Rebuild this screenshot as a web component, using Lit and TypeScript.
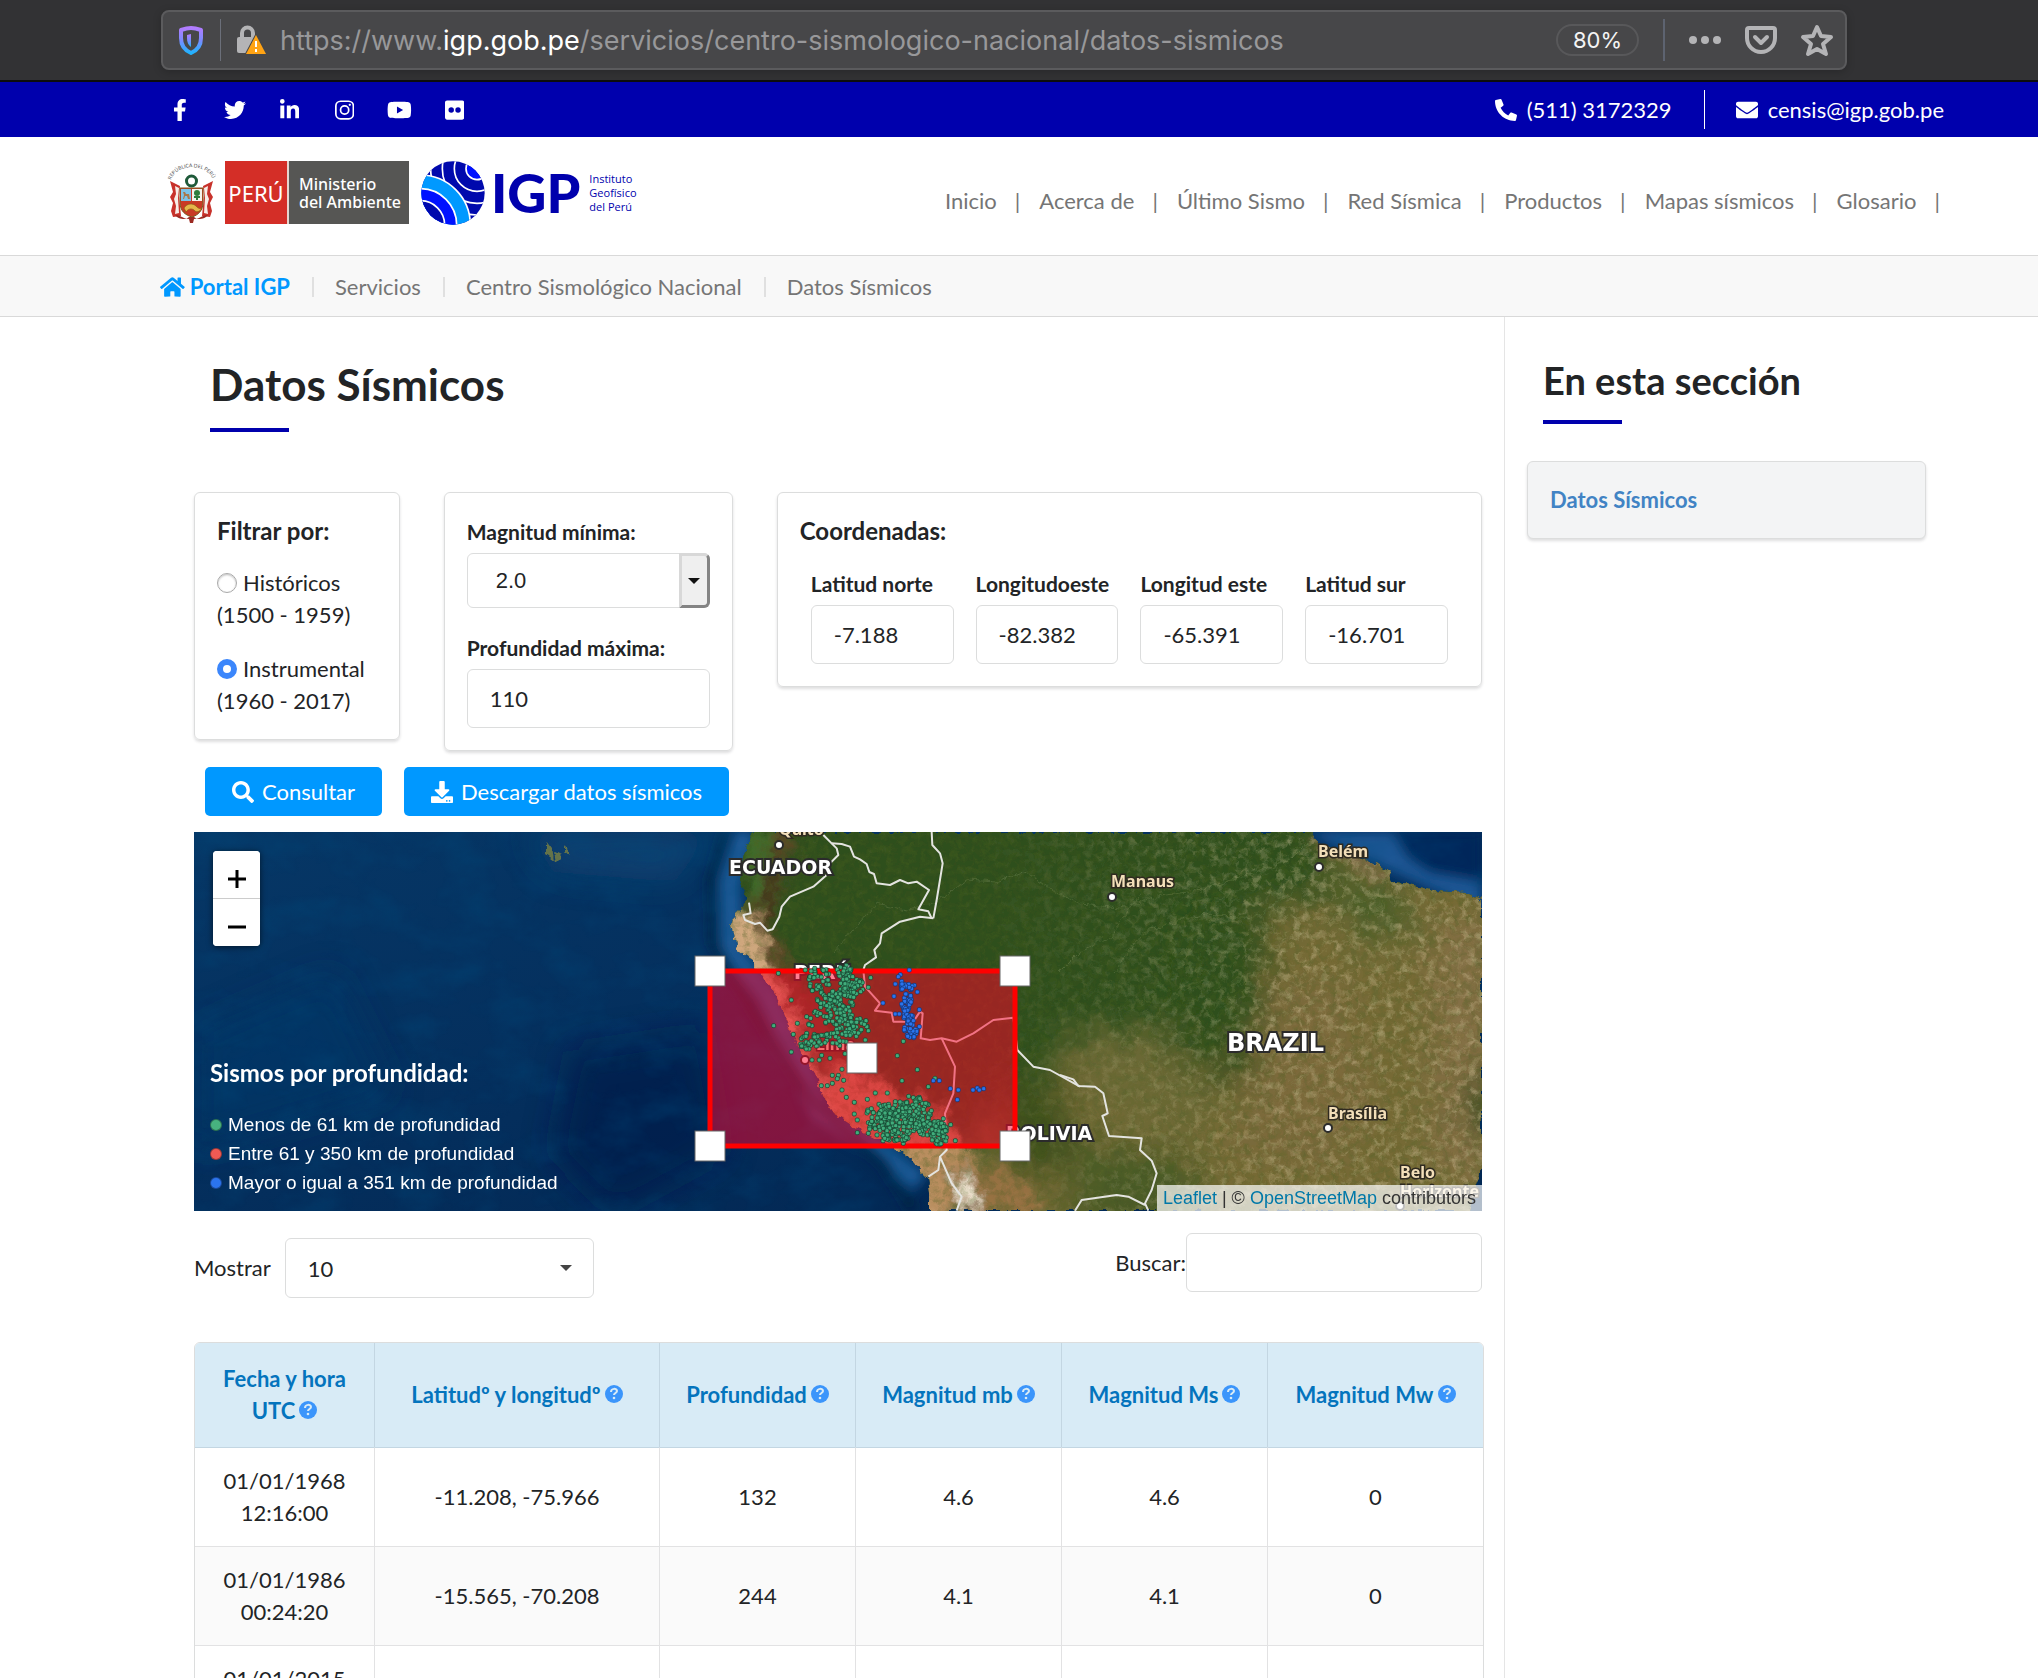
import { LitElement, html, css, svg } from "lit";
import { customElement, property } from "lit/decorators.js";

type Glyph = { box: string; d: string; flip?: boolean };

const GLYPHS: Record<string, Glyph> = {
  facebook: {
    box: "0 0 320 512",
    d: "M279.14 288l14.22-92.66h-88.91v-60.13c0-25.35 12.42-50.06 52.24-50.06h40.42V6.26S260.43 0 225.36 0c-73.22 0-121.08 44.38-121.08 124.72v70.62H22.89V288h81.39v224h100.17V288z",
  },
  twitter: {
    box: "0 0 512 512",
    d: "M459.37 151.716c.325 4.548.325 9.097.325 13.645 0 138.72-105.583 298.558-298.558 298.558-59.452 0-114.68-17.219-161.137-47.106 8.447.974 16.568 1.299 25.34 1.299 49.055 0 94.213-16.568 130.274-44.832-46.132-.975-84.792-31.188-98.112-72.772 6.498.974 12.995 1.624 19.818 1.624 9.421 0 18.843-1.3 27.614-3.573-48.081-9.747-84.143-51.98-84.143-102.985v-1.299c13.969 7.797 30.214 12.67 47.431 13.319-28.264-18.843-46.781-51.005-46.781-87.391 0-19.492 5.197-37.36 14.294-52.954 51.655 63.675 129.3 105.258 216.365 109.807-1.624-7.797-2.599-15.918-2.599-24.04 0-57.828 46.782-104.934 104.934-104.934 30.213 0 57.502 12.67 76.67 33.137 23.715-4.548 46.456-13.32 66.599-25.34-7.798 24.366-24.366 44.833-46.132 57.827 21.117-2.273 41.584-8.122 60.426-16.243-14.292 20.791-32.161 39.308-52.628 54.253z",
  },
  linkedin: {
    box: "0 0 448 512",
    d: "M100.28 448H7.4V148.9h92.88zM53.79 108.1C24.09 108.1 0 83.5 0 53.8a53.79 53.79 0 0 1 107.58 0c0 29.7-24.1 54.3-53.79 54.3zM447.9 448h-92.68V302.4c0-34.7-.7-79.2-48.29-79.2-48.29 0-55.69 37.7-55.69 76.7V448h-92.78V148.9h89.08v40.8h1.3c12.4-23.5 42.69-48.3 87.88-48.3 94 0 111.28 61.9 111.28 142.3V448z",
  },
  instagram: {
    box: "0 0 448 512",
    d: "M132 32h184a132 132 0 0 1 132 132v184a132 132 0 0 1-132 132H132A132 132 0 0 1 0 348V164A132 132 0 0 1 132 32zm0 40a92 92 0 0 0-92 92v184a92 92 0 0 0 92 92h184a92 92 0 0 0 92-92V164a92 92 0 0 0-92-92zM224 141a115 115 0 1 1 0 230 115 115 0 0 1 0-230zm0 40a75 75 0 1 0 0 150 75 75 0 0 0 0-150zM344 109a27 27 0 1 1 0 54 27 27 0 0 1 0-54z",
  },
  youtube: {
    box: "0 0 576 512",
    d: "M549.655 124.083c-6.281-23.65-24.787-42.276-48.284-48.597C458.781 64 288 64 288 64S117.22 64 74.629 75.486c-23.497 6.322-42.003 24.947-48.284 48.597-11.412 42.867-11.412 132.305-11.412 132.305s0 89.438 11.412 132.305c6.281 23.65 24.787 41.5 48.284 47.821C117.22 448 288 448 288 448s170.78 0 213.371-11.486c23.497-6.321 42.003-24.171 48.284-47.821 11.412-42.867 11.412-132.305 11.412-132.305s0-89.438-11.412-132.305zm-317.51 213.508V175.185l142.739 81.205-142.739 81.201z",
  },
  flickr: {
    box: "0 0 448 512",
    d: "M400 32H48C21.5 32 0 53.5 0 80v352c0 26.5 21.5 48 48 48h352c26.5 0 48-21.5 48-48V80c0-26.5-21.5-48-48-48zM144.5 319a63.5 63.5 0 1 1 0-127 63.5 63.5 0 0 1 0 127zm159 0a63.5 63.5 0 1 1 0-127 63.5 63.5 0 0 1 0 127z",
  },
  phone: {
    box: "0 0 512 512",
    flip: true,
    d: "M493.4 24.6l-104-24c-11.3-2.6-22.9 3.3-27.5 13.9l-48 112c-4.2 9.8-1.4 21.3 6.9 28l60.6 49.6c-36 76.7-98.9 140.5-177.2 177.2l-49.6-60.6c-6.8-8.3-18.2-11.1-28-6.9l-112 48C3.9 366.5-2 378.1.6 389.4l24 104C27.1 504.2 36.7 512 48 512c256.1 0 464-207.5 464-464 0-11.2-7.7-20.9-18.6-23.4z",
  },
  envelope: {
    box: "0 0 512 512",
    d: "M502.3 190.8c3.9-3.1 9.7-.2 9.7 4.7V400c0 26.5-21.5 48-48 48H48c-26.5 0-48-21.5-48-48V195.6c0-5 5.7-7.8 9.7-4.7 22.4 17.4 52.1 39.5 154.1 113.6 21.1 15.4 56.7 47.8 92.2 47.6 35.7.3 72-32.8 92.3-47.6 102-74.1 131.6-96.3 154-113.7zM256 320c23.2.4 56.6-29.2 73.4-41.4 132.7-96.3 142.8-104.7 173.4-128.7 5.8-4.5 9.2-11.5 9.2-18.9v-19c0-26.5-21.5-48-48-48H48c-26.5 0-48 21.5-48 48v19c0 7.4 3.4 14.3 9.2 18.9 30.6 23.9 40.7 32.4 173.4 128.7 16.8 12.2 50.2 41.8 73.4 41.4z",
  },
  home: {
    box: "0 0 576 512",
    d: "M280.37 148.26L96 300.11V464a16 16 0 0 0 16 16l112.06-.29a16 16 0 0 0 15.92-16V368a16 16 0 0 1 16-16h64a16 16 0 0 1 16 16v95.64a16 16 0 0 0 16 16.05L464 480a16 16 0 0 0 16-16V300L295.67 148.26a12.19 12.19 0 0 0-15.3 0zM571.6 251.47L488 182.56V44.05a12 12 0 0 0-12-12h-56a12 12 0 0 0-12 12v72.61L318.47 43a48 48 0 0 0-61 0L4.34 251.47a12 12 0 0 0-1.6 16.9l25.5 31A12 12 0 0 0 45.15 301l235.22-193.74a12.19 12.19 0 0 1 15.3 0L530.9 301a12 12 0 0 0 16.9-1.6l25.5-31a12 12 0 0 0-1.7-16.93z",
  },
  search: {
    box: "0 0 512 512",
    d: "M505 442.7L405.3 343c-4.5-4.5-10.6-7-17-7H372c27.6-35.3 44-79.7 44-128C416 93.1 322.9 0 208 0S0 93.1 0 208s93.1 208 208 208c48.3 0 92.7-16.4 128-44v16.3c0 6.4 2.5 12.5 7 17l99.7 99.7c9.4 9.4 24.6 9.4 33.9 0l28.3-28.3c9.4-9.4 9.4-24.6.1-34zM208 336c-70.7 0-128-57.2-128-128 0-70.7 57.2-128 128-128 70.7 0 128 57.2 128 128 0 70.7-57.2 128-128 128z",
  },
  download: {
    box: "0 0 512 512",
    d: "M216 0h80c13.3 0 24 10.7 24 24v168h87.7c17.8 0 26.7 21.5 14.1 34.1L269.7 378.3c-7.5 7.5-19.8 7.5-27.3 0L90.1 226.1c-12.6-12.6-3.7-34.1 14.1-34.1H192V24c0-13.3 10.7-24 24-24zm296 376v112c0 13.3-10.7 24-24 24H24c-13.3 0-24-10.7-24-24V376c0-13.3 10.7-24 24-24h146.7l49 49c20.1 20.1 52.5 20.1 72.6 0l49-49H488c13.3 0 24 10.7 24 24zm-124 88c0-11-9-20-20-20s-20 9-20 20 9 20 20 20 20-9 20-20zm64 0c0-11-9-20-20-20s-20 9-20 20 9 20 20 20 20-9 20-20z",
  },
};

@customElement("glyph-icon")
class GlyphIcon extends LitElement {
  @property() name = "home";
  static styles = css`
    :host {
      display: inline-flex;
      height: 22px;
    }
    .art {
      height: 100%;
      width: auto;
      fill: currentColor;
      fill-rule: evenodd;
    }
    .flip {
      transform: scaleX(-1);
    }
  `;
  render() {
    const g = GLYPHS[this.name];
    return html`<svg class="art ${g.flip ? "flip" : ""}" viewBox=${g.box} aria-hidden="true"><path d=${g.d} /></svg>`;
  }
}

@customElement("browser-bar")
class BrowserBar extends LitElement {
  static styles = css`
    :host {
      display: block;
      background: #323234;
      border-bottom: 2px solid #0c0c0d;
      padding: 10px 191px 10px 161px;
    }
    .field {
      display: flex;
      align-items: center;
      box-sizing: border-box;
      height: 60px;
      border: 2px solid #5b5b5d;
      border-radius: 8px;
      background: #474749;
      padding: 0 11px 0 14px;
      font-family: Inter, Roboto, sans-serif;
      box-shadow: 0 2px 8px rgba(0, 0, 0, 0.2);
    }
    .icon {
      display: flex;
      border: 0;
      padding: 0;
      background: none;
    }
    .rule {
      width: 1px;
      height: 42px;
      background: #6b6f7a;
      margin: 0 15px;
    }
    .url {
      flex: 1;
      margin-left: 14px;
      padding-top: 2px;
      font-size: 27px;
      line-height: 36px;
      color: #98989a;
      white-space: nowrap;
      overflow: hidden;
    }
    .domain {
      color: #fff;
    }
    .zoom {
      box-sizing: border-box;
      width: 83px;
      height: 32px;
      border: 2px solid #58585a;
      border-radius: 16px;
      background: none;
      color: #f4f4f4;
      font: 22px/28px Inter, Roboto, sans-serif;
      padding: 0;
    }
    .tools {
      display: flex;
      align-items: center;
      gap: 22px;
      margin-left: 6px;
    }
    .split {
      width: 2px;
      height: 42px;
      background: #5d6370;
      margin-left: 24px;
      margin-right: 17px;
    }
  `;
  render() {
    return html`
      <div class="field">
        <button class="icon" aria-label="Protección">
          <svg width="28" height="32" viewBox="0 0 28 32">
            <defs>
              <linearGradient id="sh" x1="0" y1="0" x2="0" y2="1">
                <stop offset="0" stop-color="#b27cff" />
                <stop offset="0.5" stop-color="#7a8cff" />
                <stop offset="1" stop-color="#21b3ff" />
              </linearGradient>
            </defs>
            <path d="M14 4C10 4 7 5 4 6v8c0 6 3 12 10 15 7-3 10-9 10-15V6c-3-1-6-2-10-2z" fill="none" stroke="url(#sh)" stroke-width="4" stroke-linejoin="round" />
            <path d="M14 10v13c-3-2-4-5-4-9v-3z" fill="url(#sh)" />
          </svg>
        </button>
        <span class="rule"></span>
        <button class="icon" aria-label="Seguridad del sitio">
          <svg width="30" height="32" viewBox="0 0 30 32">
            <path d="M6 15V9a5 5 0 0 1 11 0v5" fill="none" stroke="#b4b4b6" stroke-width="4" />
            <rect x="1" y="13" width="20" height="16" rx="2" fill="#b4b4b6" />
            <path d="M20 11l10 19H10z" fill="#ffa314" stroke="#474749" stroke-width="2" paint-order="stroke" stroke-linejoin="round" />
            <path d="M20 17v6M20 25v3" stroke="#fff" stroke-width="2" />
          </svg>
        </button>
        <div class="url">https://www.<span class="domain">igp.gob.pe</span>/servicios/centro-sismologico-nacional/datos-sismicos</div>
        <button class="zoom">80%</button>
        <span class="split"></span>
        <div class="tools">
          <button class="icon" aria-label="Más acciones">
            <svg width="34" height="12" viewBox="0 0 34 12" fill="#b4b4b6">
              <circle cx="5" cy="6" r="4" /><circle cx="17" cy="6" r="4" /><circle cx="29" cy="6" r="4" />
            </svg>
          </button>
          <button class="icon" aria-label="Guardar en Pocket">
            <svg width="34" height="34" viewBox="0 0 34 34" fill="none" stroke="#b4b4b6" stroke-linecap="round" stroke-linejoin="round">
              <path d="M5 5h24a2 2 0 0 1 2 2v8a14 14 0 0 1-28 0V7a2 2 0 0 1 2-2z" stroke-width="4" />
              <path d="M11 14l6 6 6-6" stroke-width="4" />
            </svg>
          </button>
          <button class="icon" aria-label="Marcador">
            <svg width="34" height="34" viewBox="0 0 34 34" fill="none" stroke="#b4b4b6" stroke-width="4" stroke-linejoin="round">
              <path d="M17 4l4 9 10 1-8 7 3 10-9-5-9 5 3-10-8-7 10-1z" />
            </svg>
          </button>
        </div>
      </div>
    `;
  }
}

@customElement("site-header")
class SiteHeader extends LitElement {
  static styles = css`
    :host {
      display: block;
      color: #757575;
    }
    .top {
      display: flex;
      justify-content: space-between;
      align-items: center;
      height: 55px;
      background: #0000ad;
      padding: 0 94px 0 152px;
      color: #fff;
    }
    .social,
    .contact {
      display: flex;
      align-items: center;
    }
    .social a {
      display: flex;
      justify-content: center;
      width: 55px;
      color: #fff;
    }
    .contact a {
      display: flex;
      align-items: center;
      gap: 10px;
      color: #fff;
      text-decoration: none;
    }
    .contact .mail {
      border-left: 1px solid #fff;
      margin-left: 32px;
      padding-left: 31px;
      line-height: 39px;
    }
    .brand {
      display: flex;
      justify-content: space-between;
      height: 118px;
      padding: 0 97px 0 167px;
      box-sizing: border-box;
    }
    .logos {
      display: flex;
      height: 63px;
      margin-top: 24px;
      align-items: center;
      text-decoration: none;
    }
    .peru,
    .ministry {
      display: flex;
      align-items: center;
      height: 63px;
      color: #fff;
      font-family: "Noto Sans", sans-serif;
    }
    .peru {
      width: 62px;
      justify-content: center;
      background: #d42e27;
      border-right: 2px solid #e6d5cf;
      font-size: 22px;
      margin-left: 9px;
    }
    .ministry {
      width: 110px;
      padding-left: 10px;
      background: #565654;
      font: 500 16px/18px "Noto Sans", sans-serif;
      margin-right: 12px;
    }
    .igp {
      font: 900 54px/62px Lato, sans-serif;
      color: #0000ad;
      margin: 0 9px 0 6px;
    }
    .institute {
      font: 11px/14px "Open Sans", sans-serif;
      color: #0000ad;
    }
    .menu {
      display: flex;
      gap: 18px;
      margin-top: 48px;
      line-height: 32px;
      height: 32px;
      white-space: nowrap;
    }
    .menu span {
      padding-right: 1px;
    }
    .menu a,
    .trail a {
      color: #757575;
      text-decoration: none;
    }
    .trail {
      display: flex;
      align-items: center;
      height: 58px;
      background: #f8f8f8;
      border-top: 1px solid #d9d9d9;
      border-bottom: 1px solid #d9d9d9;
      padding: 2px 0 0 160px;
    }
    .trail > * + * {
      border-left: 2px solid #e0e0e0;
      margin-left: 22px;
      padding-left: 21px;
      line-height: 20px;
    }
    .trail .root {
      display: flex;
      align-items: center;
      gap: 5px;
      color: #0098ff;
      font-weight: 700;
    }
  `;
  render() {
    const social = ["facebook", "twitter", "linkedin", "instagram", "youtube", "flickr"];
    const menu = ["Inicio", "Acerca de", "Último Sismo", "Red Sísmica", "Productos", "Mapas sísmicos", "Glosario"];
    return html`
      <div class="top">
        <div class="social">
          ${social.map((s) => html`<a href="#" aria-label=${s}><glyph-icon name=${s}></glyph-icon></a>`)}
        </div>
        <div class="contact">
          <a href="tel:5113172329"><glyph-icon name="phone"></glyph-icon>(511) 3172329</a>
          <a class="mail" href="mailto:censis@igp.gob.pe"><glyph-icon name="envelope"></glyph-icon>censis@igp.gob.pe</a>
        </div>
      </div>
      <div class="brand">
        <a class="logos" href="#">
          ${this.emblem()}
          <span class="peru">PERÚ</span>
          <span class="ministry">Ministerio<br />del Ambiente</span>
          ${this.globe()}
          <span class="igp">IGP</span>
          <span class="institute">Instituto<br />Geofísico<br />del Perú</span>
        </a>
        <nav class="menu">${menu.map((m) => html`<a href="#">${m}</a><span>|</span>`)}</nav>
      </div>
      <nav class="trail">
        <a class="root" href="#"><glyph-icon name="home"></glyph-icon>Portal IGP</a>
        <a href="#">Servicios</a>
        <a href="#">Centro Sismológico Nacional</a>
        <span>Datos Sísmicos</span>
      </nav>
    `;
  }
  private emblem() {
    return html`<svg width="49" height="63" viewBox="0 0 49 63">
      <path id="arc" d="M4 19C9 2 41 2 46 19" fill="none" />
      <text font-family="Lato, sans-serif" font-size="5" fill="#555"><textPath href="#arc">REPÚBLICA DEL PERÚ</textPath></text>
      <path d="M3 20l10 5-1 10 2 20-8 1-2-6 2-8-3-6 3-5z" fill="#c8322b" />
      <path d="M46 20l-10 5 1 10-2 20 8 1 2-6-2-8 3-6-3-5z" fill="#c8322b" />
      <path d="M8 25l4 2-1 10 1 15-4 1 1-8-2-7 2-5zM41 25l-4 2 1 10-1 15 4 1-1-8 2-7-2-5z" fill="#f7eee8" />
      <circle cx="24.500" cy="20" r="5" fill="#fff" stroke="#1f5a3a" stroke-width="3" />
      <path d="M13 27h23v14c0 9-5 13-11 15-7-2-12-6-12-15z" fill="#c93a25" stroke="#7a5a1e" stroke-width="1" />
      <path d="M14 28h10v12H14z" fill="#7cc3e8" />
      <path d="M25 28h10v12H25z" fill="#f3f3ec" />
      <path d="M16 38l1-4-1-3h2l1 2h3l1 5h-2l-1-3h-2l-1 3z" fill="#a9784a" />
      <circle cx="30" cy="32" r="3" fill="#2f7d3b" /><path d="M27 35h6v2h-2v2h-2v-2h-2z" fill="#2f7d3b" />
      <path d="M17 47c3-5 9-5 12-2s4 3 6 2c-2 4-6 5-8 2-3-2-6-1-8 2z" fill="#e5b64a" stroke="#8a5a12" stroke-width="0.700" />
      <path d="M8 54c6 0 8 4 14 4l1 4h3l1-4c6 0 8-4 14-4-3 4-7 4-11 4l-3-2h-5l-3 2c-4 0-8 0-11-4z" fill="#9c2a22" />
    </svg>`;
  }
  private globe() {
    return html`<svg width="64" height="64" viewBox="32 32 192 192">
      <clipPath id="disc"><circle cx="128" cy="128" r="95" /></clipPath>
      <g clip-path="url(#disc)" stroke="#fff" stroke-width="5">
        <circle cx="128" cy="128" r="110" fill="#0009ad" stroke="none" />
        <circle cx="200" cy="55" r="139" fill="none" />
        <circle cx="200" cy="55" r="104" fill="none" />
        <circle cx="200" cy="55" r="68" fill="none" />
        <circle cx="200" cy="55" r="33" fill="#0011ff" />
        <circle cx="30" cy="224" r="150" fill="#0099ff" />
        <circle cx="30" cy="224" r="109" fill="#0011ff" />
        <circle cx="30" cy="224" r="73" fill="#0009ad" />
      </g>
    </svg>`;
  }
}

const COAST =
  "M558 0L549 25L546 48L554 68L546 78L536 88L541 105L543 118L558 128L566 140L583 165L594 191L603 215L613 231L624 248L628 265L639 281L663 296L686 308L713 323L726 338L734 346L736 361L736 379L1274 379L1281 355L1288 336V68L1273 60L1239 58L1219 53L1199 51L1196 41L1186 33L1149 21L1123 10L1116 0Z";

/* Borders were traced at three times the map scale; the group transform brings them back. */
const BORDERS = [
  "M207 248l5 32-22 5 5 15 30 12 15-4 22 24 16-4 20-38 7-30 25-30 70-30 40-35 10-35 25-25-5-20-15-15-25-25",
  "M455 70l30 2 25 8 12 30 18 8 20 14 8 24 14 6 8 28 40 5 30-15 25 10 25-5 37 25-32 58 30 6 10 21",
  "M755 36l2 39 23 25 8 30-18 110-10 55",
  "M760 295l-40-5-60 15-55 35-5 30-17 20 5 22-33 23-5 15 5 50 45 50-15 22 50 6 5 27h60l20-30 8 5-6 75 28 5 35-5 45 10 50-25 60-40 60-7 12 97 48 50 50 10 90 50",
  "M785 655l40 85-5 80-25 60 5 110-20 20 35 80 30 40-15 42M745 1070l30-20 5-40",
  "M1140 765l40 13 15 20 50 2 25 20 13 60-16 8 20 60 98 7-5 35 35 32 15 38-15 50-20 40 10 22M1185 1172l20-32 105-15 35 5 50 25",
];

/* [centre x, centre y, radius x, radius y, count] in the same tripled scale */
type Cluster = [number, number, number, number, number];
const SHALLOW: Cluster[] = [
  [420, 480, 36, 42, 40], [495, 455, 28, 20, 24], [515, 500, 36, 34, 66], [470, 545, 60, 32, 66],
  [485, 595, 42, 32, 44], [410, 595, 40, 28, 14], [530, 620, 36, 32, 30], [470, 650, 50, 28, 30],
  [390, 665, 36, 26, 34], [600, 895, 42, 52, 50], [650, 905, 62, 62, 170], [710, 880, 46, 48, 80],
  [745, 920, 40, 30, 46], [778, 940, 26, 34, 60],
];
const DEEP: Cluster[] = [
  [676, 498, 22, 16, 18], [680, 545, 16, 30, 24], [684, 590, 16, 22, 20], [694, 625, 22, 30, 30],
];
const SHALLOW_LONE = "295,460 334,540 281,617 334,696 340,643 352,610 376,450 391,492 565,502 572,473 396,720 418,720 425,706 450,715 486,748 457,766 475,766 491,781 472,776 457,790 442,797 424,797 486,810 499,832 523,847 523,882 532,900 532,938 586,819 622,819 652,707 712,749 670,664 666,782 745,800 765,775 812,914 826,962 790,896 495,701 686,829 565,632 556,660 562,838 563,870 565,908 565,940 609,962 718,832 670,970";
const DEEP_LONE = "688,450 661,464 655,470 646,492 642,529 609,549 703,496 712,516 718,569 646,582 658,582 718,620 760,782 778,782 811,806 835,810 832,839 879,810 892,804 898,810 911,806 708,640";

function scatter(clusters: Cluster[], lone: string, seed: number) {
  let s = seed;
  const next = () => (s = (s * 16807) % 2147483647) / 2147483647;
  const dots = lone.split(" ").map((p) => p.split(",").map(Number));
  for (const [cx, cy, rx, ry, n] of clusters) {
    for (let i = 0; i < n; i++) {
      const a = next() * 6.283;
      const r = Math.sqrt(next());
      dots.push([cx + Math.cos(a) * r * rx, cy + Math.sin(a) * r * ry]);
    }
  }
  return dots.map(([x, y]) => svg`<rect x=${Math.round(x) - 6} y=${Math.round(y) - 6} width="12" height="12" rx="4" />`);
}

@customElement("quake-map")
class QuakeMap extends LitElement {
  static styles = css`
    :host {
      display: block;
      position: relative;
      background: #03305f;
      overflow: hidden;
    }
    .canvas {
      display: block;
      width: 100%;
      height: auto;
    }
    .country {
      font: 700 19px "DejaVu Sans", sans-serif;
      fill: #fff;
      stroke: #2b2b2b;
      stroke-width: 4px;
      paint-order: stroke;
    }
    .large {
      font-size: 24px;
    }
    .city {
      font: 700 16px "Noto Sans", sans-serif;
      fill: #f3dfb9;
      stroke: #2f2a20;
      stroke-width: 3px;
      paint-order: stroke;
    }
    .zoom {
      position: absolute;
      top: 19px;
      left: 19px;
      display: flex;
      flex-direction: column;
      width: 47px;
      border-radius: 4px;
      overflow: hidden;
      background: #fff;
      box-shadow: 0 1px 6px rgba(0, 0, 0, 0.6);
    }
    .zoom button {
      box-sizing: border-box;
      height: 47px;
      border: 0;
      padding: 8px 0 0;
      background: #fff;
      display: flex;
      align-items: center;
      justify-content: center;
    }
    .zoom button + button {
      border-top: 1px solid #ccc;
      height: 48px;
    }
    .legend {
      position: absolute;
      left: 16px;
      bottom: 14px;
      color: #fff;
    }
    .legend h4 {
      margin: 0 0 22px;
      font: 700 24px/30px Lato, sans-serif;
    }
    .legend ul {
      margin: 0;
      padding: 0;
      list-style: none;
      font: 19px/29px "Liberation Sans", sans-serif;
    }
    .legend li {
      display: flex;
      align-items: center;
      gap: 6px;
    }
    .dot {
      width: 10px;
      height: 10px;
      border: 1px solid rgba(0, 0, 0, 0.35);
      border-radius: 50%;
    }
    .low {
      background: #47b27f;
    }
    .mid {
      background: #f05a54;
    }
    .high {
      background: #2b74ee;
    }
    .credit {
      position: absolute;
      right: 0;
      bottom: 0;
      padding: 1px 6px 0;
      background: rgba(255, 255, 255, 0.7);
      color: #333;
      font: 18px/25px "Liberation Sans", sans-serif;
    }
    .credit a {
      color: #0078a8;
      text-decoration: none;
    }
  `;
  render() {
    const handles = [[516, 139], [821, 139], [516, 314], [821, 314], [668, 226]];
    const towns = [[585, 13], [918, 65], [1125, 35], [1134, 296], [1206, 374]];
    return html`
      <svg class="canvas" viewBox="0 0 1288 379" role="img" aria-label="Mapa de sismos">
        <defs>
          <clipPath id="land"><path d=${COAST} /></clipPath>
          <linearGradient id="east" x1="0" y1="0" x2="1" y2="0">
            <stop offset="0.35" stop-color="#fff" stop-opacity="0" />
            <stop offset="0.75" stop-color="#fff" />
          </linearGradient>
          <mask id="dry"><rect x="500" width="788" height="379" fill="url(#east)" /></mask>
          <filter id="soft6" x="-20%" y="-20%" width="140%" height="140%"><feGaussianBlur stdDeviation="6" /></filter>
          <filter id="soft16" x="-30%" y="-30%" width="160%" height="160%"><feGaussianBlur stdDeviation="16" /></filter>
          <filter id="rough" x="0" y="0" width="100%" height="100%">
            <feTurbulence type="fractalNoise" baseFrequency="0.05" numOctaves="5" seed="7" result="n" />
            <feDisplacementMap in="SourceGraphic" in2="n" scale="34" xChannelSelector="R" yChannelSelector="G" />
          </filter>
          <filter id="coastline" x="-5%" y="-5%" width="110%" height="110%">
            <feTurbulence type="fractalNoise" baseFrequency="0.12" numOctaves="3" seed="3" result="n" />
            <feDisplacementMap in="SourceGraphic" in2="n" scale="8" xChannelSelector="R" yChannelSelector="G" />
          </filter>
          <filter id="grain" x="0" y="0" width="100%" height="100%">
            <feTurbulence type="fractalNoise" baseFrequency="0.14" numOctaves="5" seed="12" />
            <feColorMatrix values="0 0 0 0 0.08  0 0 0 0 0.12  0 0 0 0 0.02  2 0 0 0 -0.8" />
          </filter>
          <filter id="shine" x="0" y="0" width="100%" height="100%">
            <feTurbulence type="fractalNoise" baseFrequency="0.12" numOctaves="5" seed="31" />
            <feColorMatrix values="0 0 0 0 0.78  0 0 0 0 0.66  0 0 0 0 0.42  0 2.4 0 0 -1.1" />
          </filter>
          <filter id="swell" x="0" y="0" width="100%" height="100%">
            <feTurbulence type="fractalNoise" baseFrequency="0.02 0.03" numOctaves="5" seed="5" />
            <feColorMatrix values="0 0 0 0 0  0 0 0 0 0.07  0 0 0 0 0.2  1.8 0 0 0 -0.75" />
          </filter>
          <linearGradient id="sea" x1="0" y1="0" x2="1" y2="1">
            <stop offset="0" stop-color="#063766" />
            <stop offset="0.5" stop-color="#042e5c" />
            <stop offset="1" stop-color="#02244f" />
          </linearGradient>
        </defs>

        <rect width="1288" height="379" fill="url(#sea)" />
        <g filter="url(#soft16)">
          <path d="M330 0h190l-40 50-120-10z" fill="#164f82" opacity="0.5" />
          <path d="M380 220l130-20 20 120-110 60-60-60z" fill="#01204a" opacity="0.7" />
          <path d="M0 200l140-60 60 120-200 60z" fill="#0a3a69" opacity="0.5" />
        </g>
        <g filter="url(#soft6)">
          <path d="M552 0l-16 50 2 70 34 40 34 70 20 50 50 30 50 40" fill="none" stroke="#1f5c99" stroke-width="20" />
          <path d="M532 0l-14 50 2 60 46 76 54 84 70 60 30 49" fill="none" stroke="#04203f" stroke-width="8" />
          <path d="M1110 0h178v80z" fill="#1d5694" />
          <path d="M1199 0l14 25 23 16 52 9V0z" fill="#06265a" />
        </g>
        <rect width="1288" height="379" filter="url(#swell)" opacity="0.4" />
        <g fill="#8a8a3c" opacity="0.7" filter="url(#coastline)">
          <path d="M352 8l6 8 2 12-8-6zM370 14l4 6-4 3zM360 20l8 4-6 6z" />
        </g>

        <g filter="url(#coastline)">
          <g clip-path="url(#land)">
            <rect x="500" width="788" height="379" fill="#2f4f1d" />
            <g filter="url(#rough)">
              <g filter="url(#soft16)">
                <path d="M1120 0h190v400H760l30-120 60-10 20-60 90 10 60-60 40-80 90-20z" fill="#756a34" />
                <path d="M870 200l110 0 60 40-30 60-110-20z" fill="#6c6935" />
                <path d="M1060 150h90l40 130-60 60-90-20z" fill="#7d6c3c" opacity="0.8" />
                <path d="M890 310l110 10 10 70H870z" fill="#4a5a26" />
                <path d="M1000 90h80l-10 90-30 60-60-10z" fill="#2f4f1d" />
                <path d="M1000 210l60 0-10 50-30-10z" fill="#37501f" />
                <path d="M1130 50l60-10 40 60-60 10z" fill="#4a5f29" />
                <path d="M1240 90h60v250h-60z" fill="#8a7248" opacity="0.8" />
                <path d="M790 240l80 20 20 70-70 20z" fill="#3c501f" />
                <path d="M1280 240h20v60h-30z" fill="#28451a" />
              </g>
              <g filter="url(#soft6)">
                <path d="M590 0l-12 50-14 50 10 20 40 60 20 40 40 40 70 40 30 50 6 60" fill="none" stroke="#5d4a28" stroke-width="22" />
                <path d="M536 84l18-8 14 28 0 24 30 50 26 60 46 56 60 30 20 40v60h-40V340l-60-30-60-50-40-90-40-60z" fill="#d0a87e" />
                <path d="M640 232l50 20 60 30 30 40 30 60h-80l-40-50-60-50z" fill="#b98e5e" />
                <path d="M756 330l60 10 40 40H750z" fill="#967143" />
                <path d="M760 345l14-4 12 20-8 18h-14z" fill="#f5ead8" />
                <path d="M548 0l30 0-10 60-14 10z" fill="#3f6a2c" />
                <path d="M578 20l10 0-12 70-8 6z" fill="#2e2613" />
                <path d="M1120 0l20 8 50 28 10 14-20-6-50-24z" fill="#806a48" />
              </g>
            </g>
            <g fill="none" stroke="#58703d" stroke-width="1" opacity="0.7">
              <path d="M640 120l24-28 18-20 30 6 30-8 30-22 30 2 30-10 30 20 24 12 40 4 40-12 40-6 50-16 40-14 30-30" />
              <path d="M866 140l20-20 30-14 30-44M920 140l30-40 60-18 50 4 40-26" />
            </g>
            <rect x="500" width="788" height="379" filter="url(#grain)" opacity="0.45" />
            <g mask="url(#dry)">
              <rect x="500" width="788" height="379" filter="url(#shine)" opacity="0.4" />
            </g>
          </g>
        </g>

        <g transform="translate(486 -12) scale(0.333333)" fill="none" stroke="#e4e4e0" stroke-width="6" stroke-linejoin="round">
          ${BORDERS.map((d) => svg`<path d=${d} />`)}
        </g>

        <g fill="#fff" stroke="#2b2b2b" stroke-width="2">
          ${towns.map(([x, y]) => svg`<circle cx=${x} cy=${y} r="4" />`)}
          <circle cx="611" cy="228" r="4" />
        </g>
        <text class="city" x="585" y="3">Quito</text>
        <text class="country" x="535" y="42">ECUADOR</text>
        <text class="country" x="600" y="147">PERÚ</text>
        <text class="city" x="622" y="218">Lima</text>
        <text class="country" x="812" y="308">BOLIVIA</text>
        <text class="country large" x="1033" y="219">BRAZIL</text>
        <text class="city" x="917" y="55">Manaus</text>
        <text class="city" x="1124" y="25">Belém</text>
        <text class="city" x="1134" y="287">Brasília</text>
        <text class="city" x="1206" y="346">Belo</text>
        <text class="city" x="1206" y="365">Horizonte</text>

        <rect x="516" y="139" width="305" height="175" fill="#ff0028" fill-opacity="0.5" stroke="#f00" stroke-width="5" />
        <g transform="translate(486 -12) scale(0.333333)" stroke-width="2">
          <g fill="#41ad7c" stroke="#123d2a">${scatter(SHALLOW, SHALLOW_LONE, 71)}</g>
          <g fill="#2b74ee" stroke="#12306b">${scatter(DEEP, DEEP_LONE, 29)}</g>
        </g>
        <g fill="#fff" stroke="#666">
          ${handles.map(([x, y]) => svg`<rect x=${x - 15} y=${y - 15} width="30" height="30" />`)}
        </g>
      </svg>
      <div class="zoom">
        <button aria-label="Acercar"><svg width="20" height="20" viewBox="0 0 20 20"><path d="M1 10h18M10 1v18" stroke="#000" stroke-width="3" /></svg></button>
        <button aria-label="Alejar"><svg width="20" height="20" viewBox="0 0 20 20"><path d="M1 10h18" stroke="#000" stroke-width="3" /></svg></button>
      </div>
      <div class="legend">
        <h4>Sismos por profundidad:</h4>
        <ul>
          <li><span class="dot low"></span>Menos de 61 km de profundidad</li>
          <li><span class="dot mid"></span>Entre 61 y 350 km de profundidad</li>
          <li><span class="dot high"></span>Mayor o igual a 351 km de profundidad</li>
        </ul>
      </div>
      <div class="credit"><a href="#">Leaflet</a> | © <a href="#">OpenStreetMap</a> contributors</div>
    `;
  }
}

@customElement("app-root")
class AppRoot extends LitElement {
  static styles = css`
    :host {
      display: flex;
      flex-direction: column;
      height: 100vh;
      background: #fff;
      color: #222426;
      font: 22px/32px Lato, "Noto Sans", sans-serif;
    }
    .page {
      flex: 1;
      min-height: 0;
      overflow-y: auto;
      scrollbar-width: none;
    }
    .layout {
      display: grid;
      grid-template-columns: minmax(0, 1fr) 533px;
    }
    main {
      padding: 36px 22px 0 194px;
      border-right: 1px solid #e5e5e5;
    }
    aside {
      padding: 36px 112px 0 22px;
    }
    h1,
    h2 {
      margin: 0 0 0 16px;
      font-weight: 700;
    }
    h1 {
      font-size: 44px;
      line-height: 62px;
    }
    h2 {
      font-size: 38px;
      line-height: 54px;
    }
    h1::after,
    h2::after {
      content: "";
      display: block;
      width: 79px;
      height: 4px;
      margin-top: 13px;
      background: #0000ad;
    }
    .section {
      display: block;
      margin-top: 37px;
      padding: 22px;
      border: 1px solid #dcdddd;
      border-radius: 6px;
      background: #f3f4f5;
      box-shadow: 0 2px 3px rgba(34, 36, 38, 0.15);
      color: #4183c4;
      font-weight: 700;
      text-decoration: none;
    }
    .filters {
      display: grid;
      grid-template-columns: repeat(16, minmax(0, 1fr));
      column-gap: 44px;
      align-items: start;
      margin-top: 60px;
    }
    .card {
      margin: 0;
      min-width: 0;
      border: 1px solid #dcdddd;
      border-radius: 6px;
      box-shadow: 0 2px 3px rgba(34, 36, 38, 0.15);
      padding: 22px;
    }
    .span3 {
      grid-column: span 3;
    }
    .span4 {
      grid-column: span 4;
    }
    .span9 {
      grid-column: span 9;
    }
    .card h3 {
      margin: 0 0 21px;
      font-size: 24px;
      line-height: 31px;
    }
    .choice {
      display: block;
      white-space: nowrap;
    }
    .choice + .choice {
      margin-top: 22px;
    }
    .choice input {
      appearance: none;
      width: 20px;
      height: 20px;
      margin: 0 6px 0 0;
      border: 1px solid #a9a9a9;
      border-radius: 50%;
      background: #fff;
      box-shadow: inset 0 1px 2px rgba(0, 0, 0, 0.25);
      vertical-align: -2px;
    }
    .choice input:checked {
      border: 6px solid #3b86fb;
      box-shadow: none;
    }
    .field + .field {
      margin-top: 23px;
    }
    .field label {
      display: block;
      margin-bottom: 4px;
      font-size: 21px;
      font-weight: 700;
      line-height: 34px;
      white-space: nowrap;
    }
    .box {
      box-sizing: border-box;
      width: 100%;
      height: 59px;
      border: 1px solid #dcdddd;
      border-radius: 6px;
      background: #fff;
      padding: 0 22px;
      color: #222426;
      font: 22px Lato, sans-serif;
    }
    .picker {
      position: relative;
    }
    .picker .box {
      appearance: none;
    }
    .native .box {
      height: 55px;
      padding-left: 28px;
      font-family: "Liberation Sans", sans-serif;
    }
    .opener {
      position: absolute;
      top: 0;
      right: 0;
      bottom: 0;
      box-sizing: border-box;
      width: 31px;
      display: flex;
      align-items: center;
      justify-content: center;
      border: 3px outset #d8d8d8;
      border-radius: 0 6px 6px 0;
      background: #efefef;
      pointer-events: none;
    }
    .caret {
      border: 6px solid transparent;
      border-top-color: #111;
      border-bottom: 0;
    }
    .coords {
      display: grid;
      grid-template-columns: repeat(4, minmax(0, 1fr));
      column-gap: 22px;
      padding: 0 11px;
    }
    .coords .field {
      margin: 0;
    }
    .actions {
      display: flex;
      gap: 22px;
      padding: 16px 11px;
    }
    .action {
      display: flex;
      align-items: center;
      gap: 8px;
      height: 49px;
      border: 0;
      border-radius: 5px;
      background: #0098ff;
      color: #fff;
      padding: 0 27px;
      font: 22px/32px Lato, sans-serif;
    }
    .tools {
      display: flex;
      justify-content: space-between;
      align-items: flex-start;
      margin: 22px 0 44px;
    }
    .show,
    .find {
      display: flex;
      align-items: center;
    }
    .show {
      gap: 14px;
      padding-top: 5px;
    }
    .show .picker {
      width: 309px;
    }
    .show .box {
      height: 60px;
    }
    .show .caret {
      position: absolute;
      right: 22px;
      top: 27px;
      border-top-color: #444;
      pointer-events: none;
    }
    .find .box {
      width: 296px;
    }
    table {
      width: 100%;
      table-layout: fixed;
      border-collapse: separate;
      border-spacing: 0;
      border: 1px solid #dcdddd;
      border-radius: 6px;
      overflow: hidden;
      text-align: center;
    }
    th,
    td {
      padding: 17px 20px;
      border-left: 1px solid #e2e2e3;
      border-top: 1px solid #e2e2e3;
    }
    th {
      padding: 20px 10px;
      border-top: 0;
      border-color: #c3d6e2;
      background: #d8ebf6;
      color: #0474bd;
      font-weight: 700;
    }
    th:first-child,
    td:first-child {
      border-left: 0;
    }
    tbody tr:first-child td {
      border-top-color: #c3d6e2;
    }
    tbody tr:nth-child(even) td {
      background: #fafafa;
    }
    .w-date {
      width: 179px;
    }
    .w-place {
      width: 285px;
    }
    .w-depth {
      width: 196px;
    }
    .w-mag {
      width: 206px;
    }
    .w-last {
      width: 216px;
    }
    .help {
      width: 18px;
      height: 18px;
      margin-left: 4px;
      vertical-align: 0;
    }
  `;

  private help() {
    return html`<svg class="help" viewBox="0 0 18 18" aria-hidden="true">
      <circle cx="9" cy="9" r="9" fill="#3b95fb" />
      <path d="M6 7c0-4 6-4 6-1 0 2-3 2-3 4" fill="none" stroke="#d8ebf6" stroke-width="2" />
      <circle cx="9" cy="13" r="1.300" fill="#d8ebf6" />
    </svg>`;
  }

  render() {
    const coords = [
      ["norte", "Latitud norte", "-7.188"],
      ["oeste", "Longitudoeste", "-82.382"],
      ["este", "Longitud este", "-65.391"],
      ["sur", "Latitud sur", "-16.701"],
    ];
    const heads = ["Latitudº y longitudº", "Profundidad", "Magnitud mb", "Magnitud Ms", "Magnitud Mw"];
    const rows = [
      ["01/01/1968 12:16:00", "-11.208, -75.966", "132", "4.6", "4.6", "0"],
      ["01/01/1986 00:24:20", "-15.565, -70.208", "244", "4.1", "4.1", "0"],
      ["01/01/2015", "", "", "", "", ""],
    ];
    return html`
      <browser-bar></browser-bar>
      <div class="page">
        <site-header></site-header>
        <div class="layout">
          <main>
            <h1>Datos Sísmicos</h1>
            <form class="filters" @submit=${(e: Event) => e.preventDefault()}>
              <div class="card span3">
                <h3>Filtrar por:</h3>
                <label class="choice"><input type="radio" name="periodo" />Históricos<br />(1500 - 1959)</label>
                <label class="choice"><input type="radio" name="periodo" checked />Instrumental<br />(1960 - 2017)</label>
              </div>
              <div class="card span4">
                <div class="field">
                  <label for="magnitud">Magnitud mínima:</label>
                  <div class="picker native">
                    <select class="box" id="magnitud"><option>2.0</option></select>
                    <span class="opener"><span class="caret"></span></span>
                  </div>
                </div>
                <div class="field">
                  <label for="profundidad">Profundidad máxima:</label>
                  <input class="box" id="profundidad" value="110" />
                </div>
              </div>
              <div class="card span9">
                <h3>Coordenadas:</h3>
                <div class="coords">
                  ${coords.map(
                    ([id, label, value]) => html`<div class="field">
                      <label for=${id}>${label}</label>
                      <input class="box" id=${id} .value=${value} />
                    </div>`
                  )}
                </div>
              </div>
            </form>
            <div class="actions">
              <button class="action"><glyph-icon name="search"></glyph-icon>Consultar</button>
              <button class="action"><glyph-icon name="download"></glyph-icon>Descargar datos sísmicos</button>
            </div>
            <quake-map></quake-map>
            <div class="tools">
              <div class="show">
                <label for="mostrar">Mostrar</label>
                <div class="picker">
                  <select class="box" id="mostrar"><option>10</option></select>
                  <span class="caret"></span>
                </div>
              </div>
              <div class="find">
                <label for="buscar">Buscar:</label>
                <input class="box" id="buscar" type="search" />
              </div>
            </div>
            <table>
              <colgroup>
                <col class="w-date" /><col class="w-place" /><col class="w-depth" /><col class="w-mag" /><col class="w-mag" /><col class="w-last" />
              </colgroup>
              <thead>
                <tr>
                  <th scope="col">Fecha y hora UTC${this.help()}</th>
                  ${heads.map((h) => html`<th scope="col">${h}${this.help()}</th>`)}
                </tr>
              </thead>
              <tbody>
                ${rows.map((r) => html`<tr>${r.map((c) => html`<td>${c}</td>`)}</tr>`)}
              </tbody>
            </table>
          </main>
          <aside>
            <h2>En esta sección</h2>
            <a class="section" href="#">Datos Sísmicos</a>
          </aside>
        </div>
      </div>
    `;
  }
}
